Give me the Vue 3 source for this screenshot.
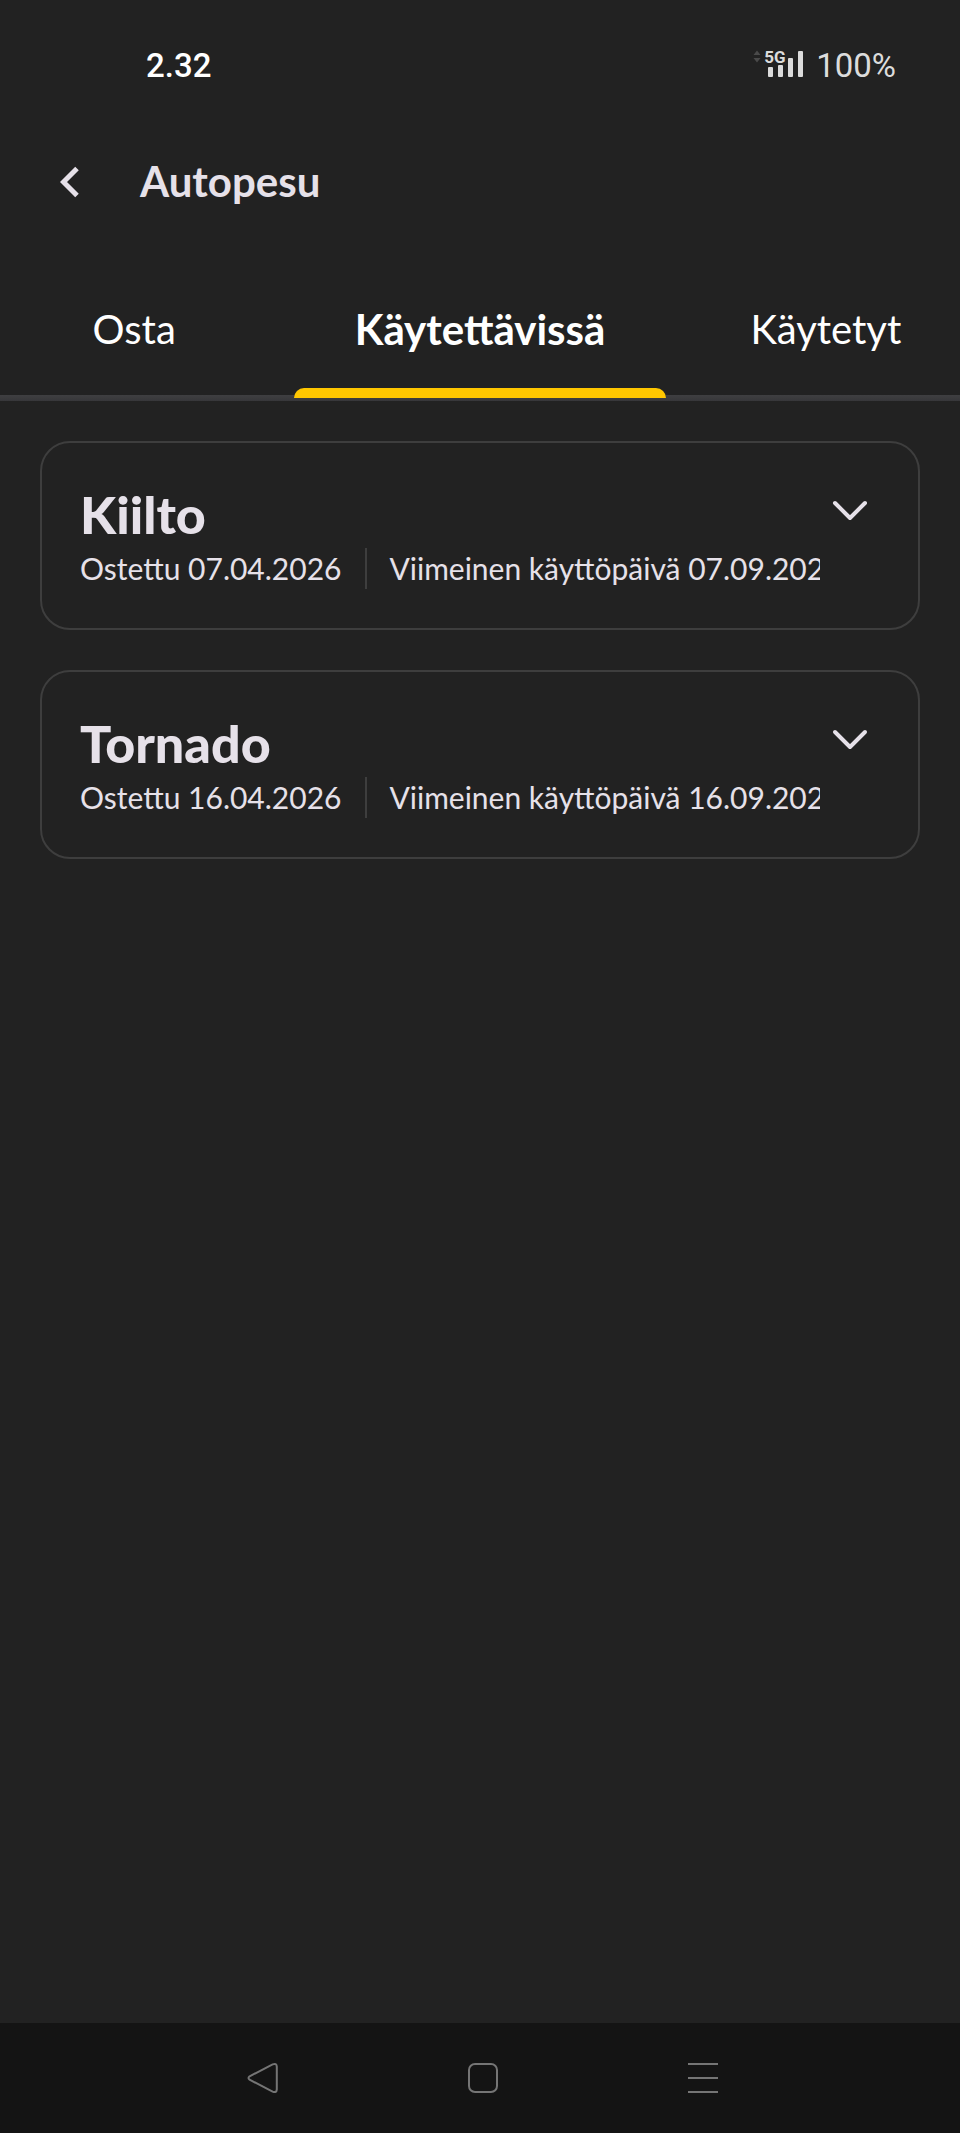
<template>
  <div class="app">
    <!-- status bar -->
    <div class="status-bar">
      <span class="clock">2.32</span>
      <div class="status-right">
        <svg class="data-arrows" width="8" height="13" viewBox="0 0 8 13">
          <path d="M0.5 5 L4 0.5 L7.5 5 Z M0.5 8 L4 12.5 L7.5 8 Z" fill="#4a4a4a" />
        </svg>
        <div class="signal">
          <span class="network">5G</span>
          <svg width="40" height="26" viewBox="0 0 40 26" fill="#dcdcdc">
            <rect x="4" y="16" width="5" height="10" rx="1" />
            <rect x="14" y="14" width="5" height="12" rx="1" />
            <rect x="24" y="7" width="5" height="19" rx="1" />
            <rect x="34" y="0" width="5" height="26" rx="1" />
          </svg>
        </div>
        <span class="battery">100%</span>
      </div>
    </div>

    <header class="header">
      <button class="back-btn" aria-label="Takaisin">
        <svg width="20" height="32" viewBox="0 0 20 32">
          <path d="M17 2.5 L3.5 16 L17 29.5" fill="none" stroke="#e6e1e9" stroke-width="5" />
        </svg>
      </button>
      <h1>Autopesu</h1>
    </header>

    <nav class="tabs">
      <button
        v-for="tab in tabs"
        :key="tab"
        class="tab"
        :class="{ active: tab === activeTab }"
        @click="activeTab = tab"
      >
        {{ tab }}
      </button>
    </nav>

    <main class="wash-list">
      <button
        v-for="wash in washes"
        :key="wash.name"
        class="wash-card"
        :aria-expanded="openWash === wash.name"
        @click="toggleWash(wash.name)"
      >
        <span class="wash-info">
          <span class="wash-name">{{ wash.name }}</span>
          <span class="wash-dates">
            <span>Ostettu {{ wash.bought }}</span>
            <span class="divider"></span>
            <span>Viimeinen käyttöpäivä {{ wash.expires }}</span>
          </span>
        </span>
        <svg class="chevron" width="60" height="60" viewBox="0 0 60 60">
          <path
            d="M15 22 L30 37 L45 22"
            fill="none"
            stroke="#e6e1e9"
            stroke-width="4"
            stroke-linecap="round"
            stroke-linejoin="round"
          />
        </svg>
      </button>
    </main>

    <!-- system navigation -->
    <footer class="system-nav">
      <button aria-label="Edellinen">
        <svg width="32" height="32" viewBox="0 0 32 32">
          <path d="M2.6 14.3 L25.6 2.4 Q29.6 0.8 29.8 4.6 V27.4 Q29.6 31.2 25.6 29.6 L2.6 17.7 Q0.4 16 2.6 14.3 Z" />
        </svg>
      </button>
      <button aria-label="Koti">
        <svg width="32" height="32" viewBox="0 0 32 32">
          <rect x="2" y="2" width="28" height="28" rx="6" />
        </svg>
      </button>
      <button aria-label="Viimeisimmät">
        <svg width="32" height="32" viewBox="0 0 32 32">
          <path d="M1 2 H31 M1 16 H31 M1 30 H31" />
        </svg>
      </button>
    </footer>
  </div>
</template>

<script setup>
import { ref } from 'vue'

const tabs = ['Osta', 'Käytettävissä', 'Käytetyt']
const activeTab = ref('Käytettävissä')

const washes = [
  { name: 'Kiilto', bought: '07.04.2026', expires: '07.09.2026' },
  { name: 'Tornado', bought: '16.04.2026', expires: '16.09.2026' }
]

const openWash = ref('')
const toggleWash = name => {
  openWash.value = openWash.value === name ? '' : name
}
</script>

<style>
body {
  background: #222222;
}
</style>

<style scoped>
.app {
  display: flex;
  flex-direction: column;
  min-height: 100vh;
  background: #222222;
  color: #e6e1e9;
  font-family: Lato, sans-serif;
}
button {
  background: none;
  border: none;
  padding: 0;
  margin: 0;
  color: inherit;
  font-family: inherit;
  cursor: pointer;
}
svg {
  display: block;
}
.status-bar {
  display: flex;
  justify-content: space-between;
  align-items: center;
  height: 132px;
  padding: 0 64px 0 146px;
  font-family: Roboto, sans-serif;
  font-size: 33px;
  line-height: 40px;
}
.clock {
  color: #ffffff;
  font-weight: 500;
}
.status-right {
  display: flex;
  align-items: center;
  color: #dcdcdc;
}
.data-arrows {
  align-self: flex-start;
  margin: 4px 3px 0 0;
}
.signal {
  position: relative;
  margin: 0 12px 4px 0;
}
.network {
  position: absolute;
  left: 0;
  top: -4px;
  font-size: 17px;
  line-height: 20px;
  font-weight: 700;
}
.header {
  display: flex;
  align-items: center;
  gap: 60px;
  height: 100px;
  padding: 0 60px;
}
h1 {
  margin: 0;
  padding-bottom: 2px;
  font-size: 42px;
  line-height: 48px;
  font-weight: 700;
}
.tabs {
  display: flex;
  justify-content: center;
  height: 169px;
  overflow: hidden;
  /* track under the tabs, the active marker overlaps its upper half */
  background: linear-gradient(#3f3f41, #37373a) bottom / 100% 6px no-repeat;
}
.tab {
  position: relative;
  flex: none;
  width: 33.3%;
  padding-top: 24px;
  color: #ffffff;
  font-size: 40px;
  line-height: 48px;
}
.tab.active {
  width: 38.75%;
  font-size: 42px;
  font-weight: 700;
}
.tab.active::after {
  content: '';
  position: absolute;
  left: 0;
  right: 0;
  bottom: 3px;
  height: 10px;
  border-radius: 10px 10px 0 0;
  background: #ffc700;
}
.wash-list {
  display: flex;
  flex-direction: column;
  flex: 1;
  gap: 40px;
  padding: 40px;
}
.wash-card {
  display: flex;
  align-items: flex-start;
  padding: 38px;
  border: 2px solid #3e3e3e;
  border-radius: 30px;
  text-align: left;
}
.wash-info {
  flex: 1;
  min-width: 0;
  overflow: hidden;
}
.wash-name {
  display: block;
  font-size: 52px;
  line-height: 66px;
  font-weight: 900;
}
.wash-dates {
  display: flex;
  align-items: center;
  font-size: 30px;
  line-height: 43px;
  white-space: nowrap;
}
.divider {
  flex: none;
  width: 2px;
  height: 41px;
  margin: 0 22px 0 24px;
  background: #3e3e3e;
}
.chevron {
  flex: none;
}
.system-nav {
  display: flex;
  justify-content: center;
  align-items: center;
  gap: 188px;
  height: 110px;
  padding-left: 6px;
  background: #141414;
}
.system-nav svg {
  fill: none;
  stroke: #757575;
  stroke-width: 2;
}
</style>
